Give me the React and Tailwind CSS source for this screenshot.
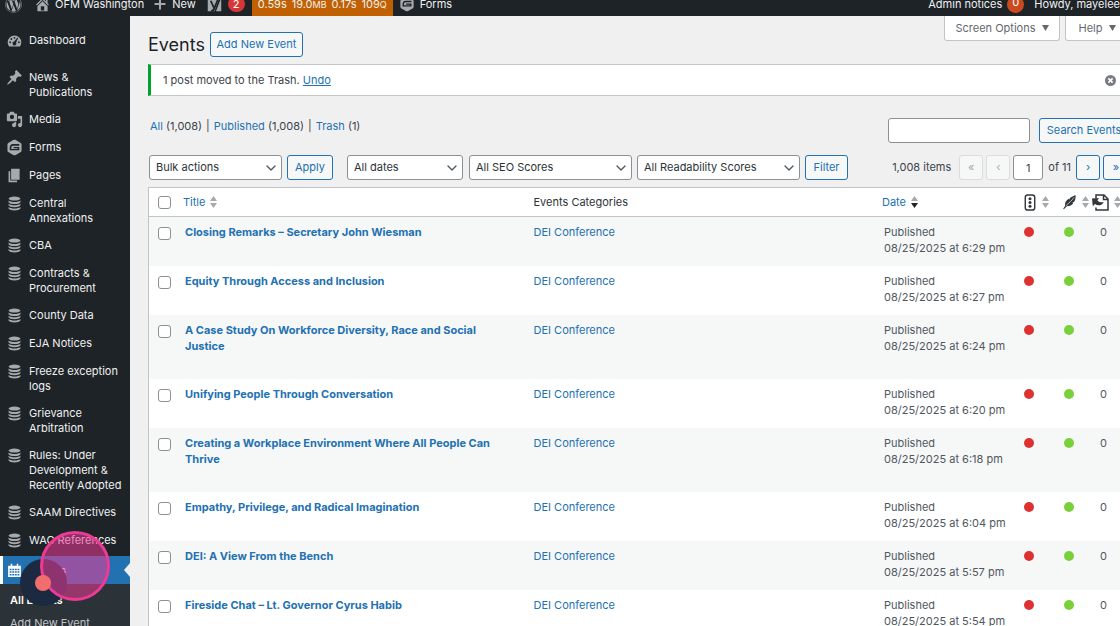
import { useState } from 'react';
import clsx from 'clsx';
import { FaWordpress } from 'react-icons/fa';
import { ChevronDown, Plus } from 'lucide-react';

const menu = [
  { label: 'Media', icon: 'media' },
  { label: 'Forms', icon: 'forms' },
  { label: 'Pages', icon: 'pages' },
  { label: 'Central Annexations', icon: 'database' },
  { label: 'CBA', icon: 'database' },
  { label: 'Contracts & Procurement', icon: 'database' },
  { label: 'County Data', icon: 'database' },
  { label: 'EJA Notices', icon: 'database' },
  { label: 'Freeze exception logs', icon: 'database' },
  { label: 'Grievance Arbitration', icon: 'database' },
  { label: 'Rules: Under Development & Recently Adopted', icon: 'database' },
  { label: 'SAAM Directives', icon: 'database' },
  { label: 'WAC References', icon: 'database' },
];

const events = [
  { id: 1, title: 'Closing Remarks – Secretary John Wiesman', time: '6:29 pm' },
  { id: 2, title: 'Equity Through Access and Inclusion', time: '6:27 pm' },
  { id: 3, title: 'A Case Study On Workforce Diversity, Race and Social Justice', time: '6:24 pm' },
  { id: 4, title: 'Unifying People Through Conversation', time: '6:20 pm' },
  { id: 5, title: 'Creating a Workplace Environment Where All People Can Thrive', time: '6:18 pm' },
  { id: 6, title: 'Empathy, Privilege, and Radical Imagination', time: '6:04 pm' },
  { id: 7, title: 'DEI: A View From the Bench', time: '5:57 pm' },
  { id: 8, title: 'Fireside Chat – Lt. Governor Cyrus Habib', time: '5:54 pm' },
];

const icons = {
  home: (
    <path d="M16 8.5l1.53 1.53-1.06 1.06L10 4.6l-6.47 6.49-1.06-1.06L10 2.5l4 4v-2h2v4zm-6-2.46l6 5.99V18H4v-5.97zM12 17v-5H8v5h4z" />
  ),
  dashboard: (
    <path
      fillRule="evenodd"
      d="M3.76 17h12.48A7.96 7.96 0 0 0 18 12a8 8 0 1 0-16 0c0 1.890.66 3.630 1.760 5zM10 5.800a1.100 1.100 0 1 1 0 2.200 1.100 1.100 0 0 1 0-2.200zM6.300 7.200a1.100 1.100 0 1 1 0 2.200 1.100 1.100 0 0 1 0-2.200zM14.300 7l-2.400 5.300a2.300 2.300 0 1 1-2.400-1L13.600 6.600zM4.900 10.900a1.100 1.100 0 1 1 0 2.200 1.100 1.100 0 0 1 0-2.200zM15.200 10.900a1.100 1.100 0 1 1 0 2.200 1.100 1.100 0 0 1 0-2.200z"
    />
  ),
  post: (
    <path d="M10.44 3.02l1.82-1.82 6.36 6.35-1.83 1.82c-1.05-.68-2.48-.57-3.41.36l-.75.75c-.92.93-1.04 2.35-.35 3.41l-1.83 1.82-2.41-2.41-2.8 2.79c-.42.42-3.38 2.71-3.8 2.29s1.86-3.39 2.28-3.81l2.79-2.79L4.1 9.36l1.83-1.82c1.05.69 2.48.57 3.4-.36l.75-.75c.93-.92 1.05-2.35.36-3.41z" />
  ),
  media: (
    <path d="M13 11V4c0-.55-.45-1-1-1h-1.67L9 1H5L3.67 3H2c-.55 0-1 .45-1 1v7c0 .55.45 1 1 1h10c.55 0 1-.45 1-1zM7 4.500c1.380 0 2.500 1.120 2.500 2.500S8.380 9.500 7 9.500 4.500 8.380 4.500 7 5.620 4.500 7 4.500zM14 6h5v10.500c0 1.380-1.120 2.500-2.500 2.500S14 17.880 14 16.500s1.120-2.500 2.500-2.500c.17 0 .34.02.5.05V9h-3V6zm-4 8.050V13h2v3.500c0 1.380-1.120 2.500-2.500 2.500S7 17.880 7 16.500 8.120 14 9.500 14c.17 0 .34.02.5.05z" />
  ),
  forms: (
    <path
      fillRule="evenodd"
      d="M10 .8c.6 0 1 .1 1.500.4l5.400 3.100c.9.5 1.400 1.300 1.400 2.300v6.800c0 1-.5 1.800-1.400 2.300l-5.400 3.100c-.9.5-2.100.5-3 0l-5.400-3.100c-.9-.5-1.400-1.300-1.400-2.300V6.600c0-1 .5-1.800 1.400-2.300l5.400-3.100C9 .9 9.400.8 10 .8zM8.300 6c-2.500 0-3.900 1.700-3.900 4.600v2.600h11.200V9.300H8.900v1.500h4.900v.9H6.200v-1.100c0-1.900.8-2.800 2.300-2.800h7.100V6z"
    />
  ),
  pages: <path d="M6 15V2h10v13H6zm-1 1h8v2H3V5h2v11z" />,
  database: (
    <>
      <ellipse cx="10" cy="4.200" rx="7" ry="2.400" />
      <path d="M3 6.500c1.300 1.100 4 1.800 7 1.800s5.700-.7 7-1.800v1.900c-.9 1.400-3.700 2.200-7 2.200s-6.100-.8-7-2.200z" />
      <path d="M3 10.300c1.300 1.100 4 1.800 7 1.800s5.700-.7 7-1.800v1.900c-.9 1.400-3.700 2.200-7 2.200s-6.100-.8-7-2.200z" />
      <path d="M3 14.100c1.300 1.100 4 1.800 7 1.800s5.700-.7 7-1.800v1.800c-.9 1.400-3.700 2.300-7 2.300s-6.100-.9-7-2.300z" />
    </>
  ),
  calendar: (
    <path
      fillRule="evenodd"
      d="M5 1h2v2.500h6V1h2v2.500h3.500v15h-17v-15H5zM3.500 7.500v2h2.500v-2zm3.500 0v2h2.500v-2zm3.500 0v2H13v-2zm3.500 0v2h2.500v-2zM3.500 11v2h2.500v-2zM7 11v2h2.500v-2zm3.500 0v2H13v-2zm3.500 0v2h2.500v-2zM3.500 14.500v2h2.500v-2zm3.500 0v2h2.500v-2zm3.500 0v2H13v-2zm3.500 0v2h2.500v-2z"
    />
  ),
  yoast: (
    <>
      <path d="M4 1h12.500L9.800 19H1V4a3 3 0 0 1 3-3zM18.200 3a3 3 0 0 1 .8 2v14h-7z" />
      <path d="M5 5l4 9M15.500 1L9.500 15.500Q8.500 18.500 5.500 18.500" fill="none" stroke="#1d2327" strokeWidth="2.400" />
    </>
  ),
};

function Icon({ name, className }) {
  return (
    <svg viewBox="0 0 20 20" fill="currentColor" className={clsx('shrink-0', className)} aria-hidden="true">
      {icons[name]}
    </svg>
  );
}

function SortArrows({ active }) {
  return (
    <svg viewBox="0 0 7 12" className="h-3 w-[7px] shrink-0" aria-hidden="true">
      <path d="M3.500 0L7 5H0z" fill="#a7aaad" />
      <path d="M0 7h7l-3.500 5z" fill={active ? '#1d2327' : '#a7aaad'} />
    </svg>
  );
}

function Triangle() {
  return (
    <svg viewBox="0 0 7 6" className="h-[6px] w-[7px]" fill="currentColor" aria-hidden="true">
      <path d="M0 0h7L3.500 6z" />
    </svg>
  );
}

function AdminBar() {
  return (
    <header className="flex h-4 items-end justify-between overflow-hidden bg-[#1d2327] text-[11px] whitespace-nowrap text-[#f0f0f1]">
      <div className="flex h-6 shrink-0 items-center">
        <a href="#about" aria-label="About WordPress" className="ml-[5px] text-[#a7aaad]">
          <FaWordpress className="size-[17px]" />
        </a>
        <a href="#site" className="ml-3 flex items-center gap-1">
          <Icon name="home" className="size-[17px] text-[#a7aaad]" />
          OFM Washington
        </a>
        <a href="#new" className="ml-2 flex items-center gap-1">
          <Plus className="size-4 text-[#a7aaad]" strokeWidth={3} />
          New
        </a>
        <a href="#seo" className="ml-[11px] flex items-center gap-[6px]">
          <Icon name="yoast" className="size-[15px] text-[#a7aaad]" />
          <span className="flex h-4 w-[17px] items-center justify-center rounded-full bg-[#d63638] text-white">2</span>
        </a>
        <a href="#queries" className="ml-[7px] flex h-6 items-center gap-[5px] bg-[#c06000] px-[6px]">
          <span>0.59s</span>
          <span>
            19.0<span className="text-[9px]">MB</span>
          </span>
          <span>0.17s</span>
          <span>
            109<span className="text-[9px]">Q</span>
          </span>
        </a>
        <a href="#forms" className="ml-[6px] flex items-center gap-[5px]">
          <Icon name="forms" className="size-4 text-[#a7aaad]" />
          Forms
        </a>
      </div>
      <div className="flex h-6 shrink-0 items-center">
        <a href="#notices" className="flex items-center gap-[5px]">
          Admin notices
          <span className="flex size-[17px] items-center justify-center rounded-full bg-[#ca4a1f] pb-1 text-white">0</span>
        </a>
        <a href="#profile" className="ml-[10px]">
          Howdy, mayelee
        </a>
      </div>
    </header>
  );
}

function MenuItem({ label, icon }) {
  return (
    <a href="#menu" className="flex min-h-7 gap-[6px] py-[6px] pr-1 pl-[6px] leading-[15px] text-[#f0f0f1]">
      <Icon name={icon} className="-my-px size-[17px] text-[#a7aaad]" />
      <span>{label}</span>
    </a>
  );
}

function Sidebar() {
  return (
    <nav className="relative w-[130px] shrink-0 bg-[#1d2327] pt-[11px] text-[11px]">
      <MenuItem label="Dashboard" icon="dashboard" />
      <div className="h-[9px]" />
      <MenuItem label="News & Publications" icon="post" />
      {menu.map((item) => (
        <MenuItem key={item.label} {...item} />
      ))}
      <div className="h-[1px]" />
      <a
        href="#events"
        className="relative flex h-7 items-center gap-2 border-l-[3px] border-white bg-[#2271b1] pl-1 font-semibold text-white"
      >
        <Icon name="calendar" className="size-[15px]" />
        Events
        <span className="absolute top-1/2 right-0 -translate-y-1/2 border-y-[7px] border-r-[6px] border-y-transparent border-r-[#f0f0f1]" />
      </a>
      <div className="flex flex-col gap-2 bg-[#2c3338] px-[10px] pt-[9px] pb-4 leading-[15px]">
        <a href="#all" className="font-semibold text-white">
          All Events
        </a>
        <a href="#add" className="text-[#c3c4c7]">
          Add New Event
        </a>
      </div>
    </nav>
  );
}

// Recorder bubble and click highlight that float over the menu
function ClickMarker() {
  return (
    <div className="pointer-events-none">
      <div className="absolute top-[559px] left-5 size-[47px] rounded-full bg-[#1b2a41]" />
      <div className="absolute top-[531px] left-10 size-[70px] rounded-full border-[3px] border-[#ee3a97] bg-[#ee3a97]/55" />
      <div className="absolute top-[575px] left-[35px] size-4 rounded-full bg-[#f26d6d]" />
    </div>
  );
}

function Select({ label, options, className }) {
  return (
    <div className={clsx('relative', className)}>
      <select
        aria-label={label}
        className="block h-[25px] w-full appearance-none rounded-[3px] border border-[#8c8f94] bg-white pr-5 pl-[6px] text-[#2c3338]"
      >
        {options.map((option) => (
          <option key={option}>{option}</option>
        ))}
      </select>
      <ChevronDown className="pointer-events-none absolute top-[5px] right-[3px] size-4 text-[#50575e]" strokeWidth={2} />
    </div>
  );
}

function Button({ className, ...props }) {
  return (
    <button
      type="button"
      className={clsx(
        'flex h-[25px] items-center justify-center rounded-[3px] border bg-[#f6f7f7]',
        'border-[#2271b1] text-[#2271b1] disabled:border-[#dcdcde] disabled:text-[#a7aaad]',
        className
      )}
      {...props}
    />
  );
}

function Check({ label, ...props }) {
  return (
    <input
      type="checkbox"
      aria-label={label}
      className="block size-[13px] appearance-none rounded-[3px] border border-[#8c8f94] bg-white checked:bg-[#2271b1]"
      {...props}
    />
  );
}

function Filters() {
  return (
    <div className="mt-3 flex items-center justify-between text-[11px] whitespace-nowrap">
      <div className="flex shrink-0 items-center pl-[1px]">
        <Select label="Bulk actions" options={['Bulk actions', 'Edit', 'Move to Trash']} className="w-[133px]" />
        <Button className="ml-[5px] w-[46px]">Apply</Button>
        <Select label="Filter by date" options={['All dates']} className="ml-[14px] w-[116px]" />
        <Select label="Filter by SEO score" options={['All SEO Scores']} className="ml-[6px] w-[163px]" />
        <Select label="Filter by readability" options={['All Readability Scores']} className="ml-[5px] w-[163px]" />
        <Button className="ml-[5px] w-[43px]">Filter</Button>
      </div>
      <div className="flex shrink-0 items-center text-[#3c434a]">
        <span className="mr-2">1,008 items</span>
        <Button disabled className="mr-[3px] w-6" aria-label="First page">
          «
        </Button>
        <Button disabled className="mr-[3px] w-6" aria-label="Previous page">
          ‹
        </Button>
        <input
          aria-label="Current page"
          defaultValue="1"
          className="h-[25px] w-[30px] rounded-[3px] border border-[#8c8f94] bg-white text-center"
        />
        <span className="mx-[5px]">of 11</span>
        <Button className="mr-[3px] w-6" aria-label="Next page">
          ›
        </Button>
        <Button className="w-[26px]" aria-label="Last page">
          »
        </Button>
      </div>
    </div>
  );
}

function EventsTable() {
  const [selected, setSelected] = useState([]);

  const toggle = (id) => {
    setSelected((prev) => (prev.includes(id) ? prev.filter((item) => item !== id) : [...prev, id]));
  };

  return (
    <table className="mt-[7px] w-full table-fixed border-separate border-spacing-0 border border-[#c3c4c7] bg-white text-left text-[11px] leading-4 text-[#50575e]">
      <colgroup>
        <col className="w-7" />
        <col />
        <col />
        <col className="w-[140px]" />
        <col className="w-10" />
        <col className="w-[38px]" />
        <col className="w-9" />
      </colgroup>
      <thead>
        <tr className="h-[29px] text-[#2c3338] [&>th]:border-b [&>th]:border-[#c3c4c7] [&>th]:font-normal">
          <th className="pl-[9px]">
            <Check
              label="Select all"
              checked={selected.length === events.length}
              onChange={(e) => setSelected(e.target.checked ? events.map((event) => event.id) : [])}
            />
          </th>
          <th className="pl-[6px]">
            <a href="#title" className="flex items-center gap-[5px] text-[#2271b1]">
              Title <SortArrows />
            </a>
          </th>
          <th className="pl-2">Events Categories</th>
          <th className="pl-2">
            <a href="#date" className="flex items-center gap-[5px] text-[#2271b1]">
              Date <SortArrows active />
            </a>
          </th>
          <th className="pl-[10px]">
            <a href="#score" aria-label="SEO score" className="flex items-center gap-[6px]">
              <svg viewBox="0 0 12 18" className="h-[17px] w-3" aria-hidden="true">
                <rect x="1" y="1" width="10" height="16" rx="2.500" fill="none" stroke="#32373c" strokeWidth="1.500" />
                <circle cx="6" cy="5" r="1.600" fill="#32373c" />
                <circle cx="6" cy="9" r="1.600" fill="#32373c" />
                <circle cx="6" cy="13" r="1.600" fill="#32373c" />
              </svg>
              <SortArrows />
            </a>
          </th>
          <th className="pl-[9px]">
            <a href="#readability" aria-label="Readability score" className="flex items-center gap-[6px]">
              <svg viewBox="0 0 14 16" className="h-4 w-[13px]" aria-hidden="true">
                <path
                  d="M13.500.5c.3 3-.2 5.300-1.400 7.300l-2 .8 1 .4c-1.500 2.500-3.500 3.500-7 3.600L1 15.700l-.8-.5 2-3C1.600 8.700 3.500 6 6.500 4.200l.2 1.500 1-2.200C9.800 2.400 11.800 1.500 13.500.5z"
                  fill="#32373c"
                />
                <path d="M3 12C6 9.500 9 7 12 3" fill="none" stroke="#fff" strokeWidth=".7" />
              </svg>
              <SortArrows />
            </a>
          </th>
          <th>
            <a href="#links" aria-label="Outgoing links" className="flex items-center gap-[5px]">
              <svg viewBox="0 0 17 17" className="size-[17px] shrink-0" aria-hidden="true">
                <path
                  d="M4 4.500V1h8l4 4v11H4v-2.500M11.500 1v4.500H16"
                  fill="none"
                  stroke="#32373c"
                  strokeWidth="1.500"
                />
                <path d="M0 4.500l7-.5-1.600 2.200c1.500 2 3.500 2.500 6.300 1.700-1.300 3.200-5.700 4.600-8.700 2.100L.8 12.300z" fill="#32373c" />
              </svg>
              <SortArrows />
            </a>
          </th>
        </tr>
      </thead>
      <tbody>
        {events.map((event) => (
          <tr
            key={event.id}
            className="h-[49px] odd:bg-[#f6f7f7] [&_input]:mt-[3px] [&>td]:pt-[7px] [&>td]:align-top"
          >
            <td className="pl-[9px]">
              <Check
                label={`Select ${event.title}`}
                checked={selected.includes(event.id)}
                onChange={() => toggle(event.id)}
              />
            </td>
            <td className="pr-2 pb-[25px] pl-2 font-bold">
              <a href="#edit" className="text-[#2271b1]">
                {event.title}
              </a>
            </td>
            <td className="pl-2">
              <a href="#category" className="text-[#2271b1]">
                DEI Conference
              </a>
            </td>
            <td className="pl-[10px] whitespace-nowrap">
              Published
              <br />
              08/25/2025 at {event.time}
            </td>
            <td className="pl-[10px]">
              <span className="mt-[3px] block size-[10px] rounded-full bg-[#dc3232]" />
            </td>
            <td className="pl-[10px]">
              <span className="mt-[3px] block size-[10px] rounded-full bg-[#7ad03a]" />
            </td>
            <td className="pl-2">0</td>
          </tr>
        ))}
      </tbody>
    </table>
  );
}

export default function App() {
  return (
    <div className="relative flex h-screen flex-col overflow-hidden bg-[#f0f0f1] font-['Inter',sans-serif] text-[#3c434a]">
      <AdminBar />
      <div className="flex min-h-0 flex-1">
        <Sidebar />
        <main className="min-w-0 flex-1 pl-[18px]">
          <div className="-mr-[9px]">
            <div className="flex items-start justify-between">
              <div className="mt-4 flex items-center gap-[5px]">
                <h1 className="text-[18px] leading-6 text-[#1d2327]">Events</h1>
                <Button className="w-[93px] text-[11px]">Add New Event</Button>
              </div>
              <div className="flex gap-[5px] text-[11px] text-[#646970]">
                <button
                  type="button"
                  className="flex h-[25px] w-[116px] items-center justify-center gap-[6px] rounded-b-[3px] border border-t-0 border-[#c3c4c7] bg-white"
                >
                  Screen Options <Triangle />
                </button>
                <button
                  type="button"
                  className="flex h-[25px] w-16 items-center justify-center gap-[6px] rounded-b-[3px] border border-t-0 border-[#c3c4c7] bg-white"
                >
                  Help <Triangle />
                </button>
              </div>
            </div>

            <div className="mt-[7px] flex h-8 items-center justify-between border border-l-[3px] border-[#c3c4c7] border-l-[#00a32a] bg-white pr-3 pl-3 text-[11px]">
              <p>
                1 post moved to the Trash.{' '}
                <a href="#undo" className="text-[#2271b1] underline">
                  Undo
                </a>
              </p>
              <button type="button" aria-label="Dismiss this notice">
                <svg viewBox="0 0 12 12" className="size-[11px]" aria-hidden="true">
                  <circle cx="6" cy="6" r="6" fill="#787c82" />
                  <path d="M3.700 3.700l4.600 4.600M8.300 3.700L3.700 8.300" stroke="#fff" strokeWidth="1.800" />
                </svg>
              </button>
            </div>

            <div className="mt-[22px] flex items-start justify-between text-[11px]">
              <ul className="flex gap-1 pl-[2px] leading-[17px]">
                <li>
                  <a href="#all" className="text-[#2271b1]">All</a> (1,008)
                </li>
                <li>|</li>
                <li>
                  <a href="#published" className="text-[#2271b1]">Published</a> (1,008)
                </li>
                <li>|</li>
                <li>
                  <a href="#trash" className="text-[#2271b1]">Trash</a> (1)
                </li>
              </ul>
              <div className="flex gap-[9px]">
                <input
                  type="search"
                  aria-label="Search Events"
                  className="h-[25px] w-[142px] rounded-[3px] border border-[#8c8f94] bg-white px-2"
                />
                <Button className="w-[90px]">Search Events</Button>
              </div>
            </div>

            <Filters />
            <EventsTable />
          </div>
        </main>
      </div>
      <ClickMarker />
    </div>
  );
}
